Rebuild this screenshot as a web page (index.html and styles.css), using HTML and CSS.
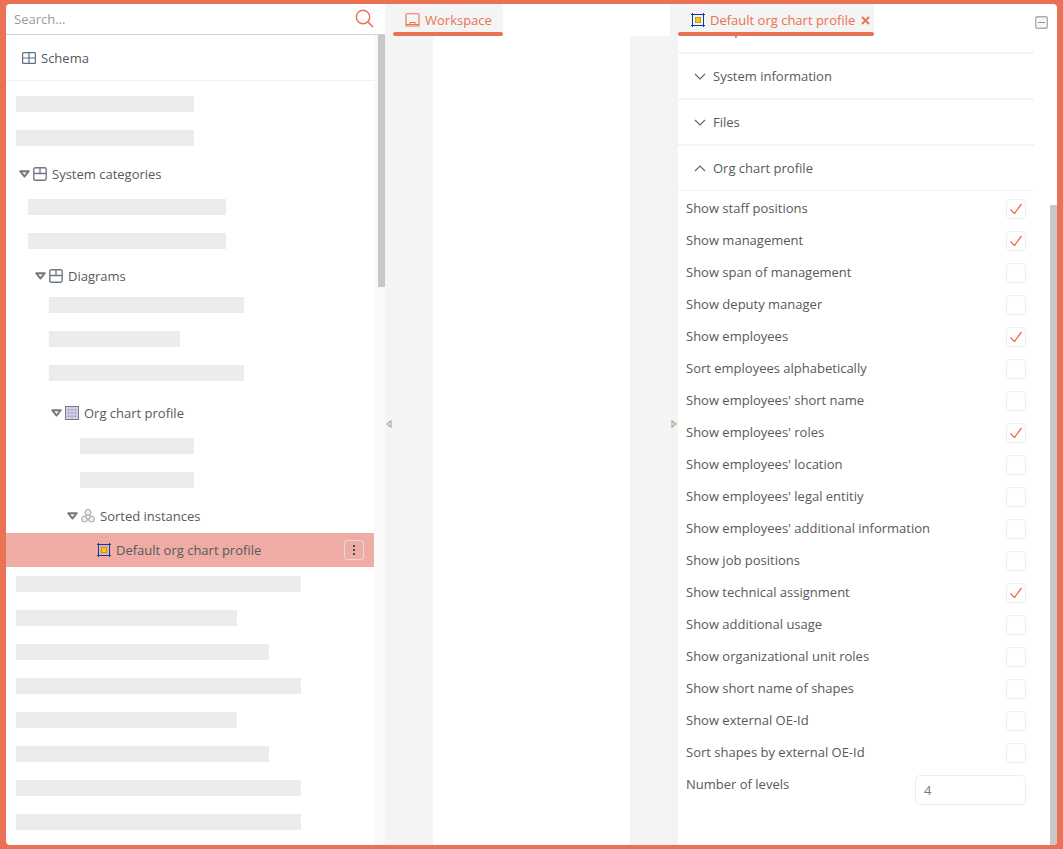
FILE: index.html
```html
<!DOCTYPE html>
<html lang="en">
<head>
<meta charset="utf-8">
<title>Default org chart profile</title>
<link rel="stylesheet" href="styles.css">
</head>
<body>
<svg class="defs" width="0" height="0" aria-hidden="true">
  <symbol id="tri" viewBox="0 0 11 8"><path d="M1.200 1.200H9.800L5.500 6.600Z" fill="#f4f4f4" stroke="#77787c" stroke-width="1.900" stroke-linejoin="round"/></symbol>
  <symbol id="box" viewBox="0 0 14 14"><path d="M2.500 .8H11.500Q13.200 .8 13.200 2.500V11.500Q13.200 13.200 11.500 13.200H2.500Q.8 13.200 .8 11.500V2.500Q.8 .8 2.500 .8ZM.8 6.500H13.200M7 .8V6.500" fill="none" stroke="#717884" stroke-width="1.400"/></symbol>
  <symbol id="prof" viewBox="0 0 14 14"><path d="M1.500 0V14M12.500 0V14M0 1.500H14M0 12.500H14" stroke="#1238a8" stroke-width="1" fill="none"/><rect x="4.400" y="4.400" width="5.200" height="5.200" fill="#f6c900" stroke="#b8901a" stroke-width=".8"/></symbol>
</svg>
<div class="app">
  <aside class="left">
    <div class="search">
      <span class="search-text">Search...</span>
      <svg class="search-icon" width="19" height="19" viewBox="0 0 19 19"><circle cx="8" cy="8" r="6.700" fill="none" stroke="#ea7153" stroke-width="1.400"/><path d="M12.800 12.800L18 18" stroke="#ea7153" stroke-width="1.600"/></svg>
    </div>
    <div class="left-body">
      <div class="tree-col">
        <div class="schema">
          <svg width="14" height="12" viewBox="0 0 14 12"><path d="M1.500 .6H12.500Q13.400 .6 13.400 1.500V10.500Q13.400 11.400 12.500 11.400H1.500Q.6 11.400 .6 10.500V1.500Q.6 .6 1.500 .6ZM.6 6H13.400M7 .6V11.400" fill="none" stroke="#5d6f82" stroke-width="1.200"/></svg>
          <span>Schema</span>
        </div>
        <div class="tree">
          <div class="skel l0 w178"></div>
          <div class="skel l0 w178"></div>
          <div class="node n-sys">
            <svg class="tri" width="11" height="8"><use href="#tri"/></svg>
            <svg class="ic" width="14" height="14"><use href="#box"/></svg>
            <span>System categories</span>
          </div>
          <div class="skel l1 w198"></div>
          <div class="skel l1 w198"></div>
          <div class="node n-dia">
            <svg class="tri" width="11" height="8"><use href="#tri"/></svg>
            <svg class="ic" width="14" height="14"><use href="#box"/></svg>
            <span>Diagrams</span>
          </div>
          <div class="skel l2 w195"></div>
          <div class="skel l2 w131"></div>
          <div class="skel l2 w195"></div>
          <div class="node n-org">
            <svg class="tri" width="11" height="8"><use href="#tri"/></svg>
            <svg class="ic" width="14" height="14" viewBox="0 0 14 14"><rect x=".5" y=".5" width="13" height="13" fill="#dcdcf4" stroke="#77787f"/><path d="M3.750 .5V13.500M7 .5V13.500M10.250 .5V13.500M.5 3.750H13.500M.5 7H13.500M.5 10.250H13.500" stroke="#a3a3bd" stroke-width=".8"/></svg>
            <span>Org chart profile</span>
          </div>
          <div class="skel l3 w114"></div>
          <div class="skel l3 w114"></div>
          <div class="node n-inst">
            <svg class="tri" width="11" height="8"><use href="#tri"/></svg>
            <svg class="ic" width="14" height="14" viewBox="0 0 14 14"><g fill="#f1f1f4" stroke="#94969d" stroke-width=".9"><circle cx="7" cy="3.500" r="3"/><circle cx="3.600" cy="10" r="3"/><circle cx="10.400" cy="10" r="3"/><circle cx="7" cy="8" r="2.200"/></g></svg>
            <span>Sorted instances</span>
          </div>
          <div class="selected">
            <svg class="ic" width="14" height="14"><use href="#prof"/></svg>
            <span>Default org chart profile</span>
            <span class="more"><i></i><i></i><i></i></span>
          </div>
          <div class="skel l0 w285"></div>
          <div class="skel l0 w221"></div>
          <div class="skel l0 w253"></div>
          <div class="skel l0 w285"></div>
          <div class="skel l0 w221"></div>
          <div class="skel l0 w253"></div>
          <div class="skel l0 w285"></div>
          <div class="skel l0 w285"></div>
        </div>
      </div>
      <div class="track"><div class="thumb thumb-left"></div></div>
    </div>
  </aside>
  <main class="main">
    <div class="topbar">
      <div class="tab tab-work">
        <div class="tab-label">
          <svg class="ws-icon" width="15" height="14" viewBox="0 0 15 14"><path d="M2 .7H13Q14 .7 14 1.700V11.500H1V1.700Q1 .7 2 .7ZM0 13H15M5 11.500V9.500H10V11.500" fill="none" stroke="#ea7153" stroke-width="1.100"/></svg>
          <span>Workspace</span>
        </div>
        <div class="underline"></div>
      </div>
      <div class="top-gap"></div>
      <div class="top-right">
        <div class="tab tab-prof">
          <div class="tab-label">
            <svg width="14" height="14"><use href="#prof"/></svg>
            <span class="tab-title">Default org chart profile</span>
            <svg class="close" width="9" height="9" viewBox="0 0 9 9"><path d="M1 1L8 8M8 1L1 8" stroke="#ea7153" stroke-width="1.800"/></svg>
          </div>
          <div class="underline"></div>
        </div>
        <svg class="collapse" width="13" height="13" viewBox="0 0 13 13"><rect x=".7" y=".7" width="11.600" height="11.600" rx="1.500" fill="#f8f8f8" stroke="#a9aeb6" stroke-width="1.400"/><path d="M3 6.500H10" stroke="#8f959e" stroke-width="1.200"/></svg>
      </div>
    </div>
    <div class="work">
      <div class="gutter gutter-l"><svg width="6" height="8" viewBox="0 0 6 8"><path d="M5 1V7L1 4Z" fill="#f4f4f4" stroke="#a8a8a8" stroke-width="1.200"/></svg></div>
      <div class="canvas"></div>
      <div class="gutter gutter-r"><svg width="6" height="8" viewBox="0 0 6 8"><path d="M1 1V7L5 4Z" fill="#f4f4f4" stroke="#b0a78f" stroke-width="1.200"/></svg></div>
      <section class="panel">
        <div class="panel-scroll">
          <div class="sec sec-first"><svg class="chev" width="12" height="7" viewBox="0 0 12 7"><path d="M1 1L6 6L11 1" fill="none" stroke="#5f6670" stroke-width="1.200"/></svg><span>Scope</span></div>
          <div class="sec"><svg class="chev" width="12" height="7" viewBox="0 0 12 7"><path d="M1 1L6 6L11 1" fill="none" stroke="#5f6670" stroke-width="1.200"/></svg><span>System information</span></div>
          <div class="sec"><svg class="chev" width="12" height="7" viewBox="0 0 12 7"><path d="M1 1L6 6L11 1" fill="none" stroke="#5f6670" stroke-width="1.200"/></svg><span>Files</span></div>
          <div class="sec sec-open"><svg class="chev" width="12" height="7" viewBox="0 0 12 7"><path d="M1 6L6 1L11 6" fill="none" stroke="#5f6670" stroke-width="1.200"/></svg><span>Org chart profile</span></div>
          <div class="rows">
            <label class="row"><span class="row-text">Show staff positions</span><span class="cb on"><svg width="14" height="12" viewBox="0 0 14 12"><path d="M1.500 6.500L5.500 10.500L12.500 1" fill="none" stroke="#ea7153" stroke-width="1.300"/></svg></span></label>
            <label class="row"><span class="row-text">Show management</span><span class="cb on"><svg width="14" height="12" viewBox="0 0 14 12"><path d="M1.500 6.500L5.500 10.500L12.500 1" fill="none" stroke="#ea7153" stroke-width="1.300"/></svg></span></label>
            <label class="row"><span class="row-text">Show span of management</span><span class="cb"></span></label>
            <label class="row"><span class="row-text">Show deputy manager</span><span class="cb"></span></label>
            <label class="row"><span class="row-text">Show employees</span><span class="cb on"><svg width="14" height="12" viewBox="0 0 14 12"><path d="M1.500 6.500L5.500 10.500L12.500 1" fill="none" stroke="#ea7153" stroke-width="1.300"/></svg></span></label>
            <label class="row"><span class="row-text">Sort employees alphabetically</span><span class="cb"></span></label>
            <label class="row"><span class="row-text">Show employees' short name</span><span class="cb"></span></label>
            <label class="row"><span class="row-text">Show employees' roles</span><span class="cb on"><svg width="14" height="12" viewBox="0 0 14 12"><path d="M1.500 6.500L5.500 10.500L12.500 1" fill="none" stroke="#ea7153" stroke-width="1.300"/></svg></span></label>
            <label class="row"><span class="row-text">Show employees' location</span><span class="cb"></span></label>
            <label class="row"><span class="row-text">Show employees' legal entitiy</span><span class="cb"></span></label>
            <label class="row"><span class="row-text">Show employees' additional information</span><span class="cb"></span></label>
            <label class="row"><span class="row-text">Show job positions</span><span class="cb"></span></label>
            <label class="row"><span class="row-text">Show technical assignment</span><span class="cb on"><svg width="14" height="12" viewBox="0 0 14 12"><path d="M1.500 6.500L5.500 10.500L12.500 1" fill="none" stroke="#ea7153" stroke-width="1.300"/></svg></span></label>
            <label class="row"><span class="row-text">Show additional usage</span><span class="cb"></span></label>
            <label class="row"><span class="row-text">Show organizational unit roles</span><span class="cb"></span></label>
            <label class="row"><span class="row-text">Show short name of shapes</span><span class="cb"></span></label>
            <label class="row"><span class="row-text">Show external OE-Id</span><span class="cb"></span></label>
            <label class="row"><span class="row-text">Sort shapes by external OE-Id</span><span class="cb"></span></label>
            <div class="levels"><span>Number of levels</span><span class="num">4</span></div>
          </div>
        </div>
        <div class="thumb-wrap"><div class="thumb thumb-right"></div></div>
      </section>
    </div>
  </main>
</div>
</body>
</html>
```
FILE: styles.css
```css
* { box-sizing: border-box; }
html, body { margin: 0; height: 100%; }
body {
  background: #ea7153;
  padding: 4px 6px;
  font-family: "Open Sans", "Liberation Sans", sans-serif;
  font-size: 13px;
  color: #555a60;
  overflow: hidden;
}
.defs { position: absolute; }
svg { display: block; flex: none; }
.app {
  display: flex;
  height: 841px;
  background: #fff;
  border-radius: 4px;
  overflow: hidden;
}
.left { width: 379px; display: flex; flex-direction: column; flex: none; }
.search {
  height: 31px;
  flex: none;
  display: flex;
  align-items: center;
  justify-content: space-between;
  padding: 0 11px 1px 8px;
  border-bottom: 1px solid #d2d2d2;
}
.search-text { color: #9a9a9a; }
.left-body { flex: 1; display: flex; min-height: 0; }
.tree-col { width: 368px; flex: none; display: flex; flex-direction: column; overflow: hidden; }
.schema {
  height: 46px;
  flex: none;
  display: flex;
  align-items: center;
  gap: 5px;
  padding: 0 0 0 16px;
  border-bottom: 1px solid #f1f1f1;
}
.tree { display: flex; flex-direction: column; padding-top: 6px; }
.skel { height: 16px; margin: 9px 0; background: #ececec; flex: none; }
.l0 { margin-left: 10px; }
.l1 { margin-left: 22px; }
.l2 { margin-left: 43px; }
.l3 { margin-left: 74px; }
.w114 { width: 114px; }
.w131 { width: 131px; }
.w178 { width: 178px; }
.w195 { width: 195px; }
.w198 { width: 198px; }
.w221 { width: 221px; }
.w253 { width: 253px; }
.w285 { width: 285px; }
.node { height: 24px; flex: none; display: flex; align-items: center; }
.node .tri { margin-right: 3px; }
.node .ic { margin-right: 5px; }
.n-sys { margin: 7px 0 4px; padding-left: 13px; }
.n-dia { margin: 6px 0 0; padding-left: 29px; }
.n-org { margin: 11px 0 4px; padding-left: 45px; }
.n-inst { margin: 7px 0 5px; padding-left: 61px; }
.selected {
  height: 34px;
  flex: none;
  display: flex;
  align-items: center;
  padding: 0 10px 0 91px;
  background: #eeaca4;
}
.selected .ic { margin-right: 5px; }
.more {
  margin-left: auto;
  width: 20px;
  height: 20px;
  border: 1px solid #dcdcdc;
  border-radius: 3px;
  display: flex;
  flex-direction: column;
  align-items: center;
  justify-content: center;
  gap: 2px;
}
.more i { width: 2px; height: 2px; background: #4a4a4a; display: block; }
.track { width: 11px; flex: none; background: #f9f9f9; display: flex; justify-content: flex-end; }
.thumb { background: #c8c8c8; width: 7px; }
.thumb-left { height: 252px; }
.main { flex: 1; display: flex; flex-direction: column; min-width: 0; }
.topbar { height: 32px; flex: none; display: flex; position: relative; z-index: 1; }
.tab { background: #f4f4f4; display: flex; flex-direction: column; height: 32px; flex: none; }
.tab-label { flex: 1; display: flex; align-items: center; gap: 5px; padding: 4px 0 0 21px; color: #ea7153; min-height: 0; }
.ws-icon { margin-left: -1px; }
.tab-title { white-space: nowrap; }
.underline { height: 4px; border-radius: 2px; background: #ea7153; margin-left: 8px; flex: none; }
.tab-work { width: 118px; }
.tab-prof { width: 204px; }
.tab-prof .close { margin-left: 1px; }
.top-gap { flex: 1; }
.top-right { width: 387px; flex: none; display: flex; justify-content: space-between; padding: 12px 10px 0 0; height: 32px; }
.top-right .tab { margin-top: -12px; }
.collapse { margin-right: -1px; }
.work { flex: 1; display: flex; min-height: 0; }
.gutter { width: 48px; flex: none; background: #f4f4f4; padding-top: 384px; }
.gutter-l { padding-left: 1px; }
.gutter-r { padding-left: 41px; }
.canvas { width: 197px; flex: none; }
.panel { flex: 1; display: flex; min-width: 0; }
.panel-scroll { width: 372px; flex: none; padding-right: 16px; overflow: hidden; }
.sec {
  height: 46px;
  display: flex;
  align-items: center;
  gap: 7px;
  padding-left: 16px;
  border-bottom: 2px solid #f4f4f4;
}
.sec-first { margin-top: -28px; }
.sec-open { border-bottom: 1px solid #f1f1f1; height: 45px; }
.rows { padding: 2px 8px 0; }
.row { height: 32px; display: flex; align-items: center; justify-content: space-between; }
.row-text { margin-bottom: 2px; }
.cb {
  width: 20px;
  height: 20px;
  border: 1px solid #eeeeee;
  border-radius: 4px;
  display: flex;
  align-items: center;
  justify-content: center;
}
.levels { display: flex; justify-content: space-between; align-items: flex-start; margin-top: 6px; }
.num {
  width: 111px;
  height: 30px;
  border: 1px solid #eeeeee;
  border-radius: 5px;
  padding-left: 8px;
  line-height: 28px;
  color: #777;
}
.thumb-wrap { flex: 1; display: flex; flex-direction: column; justify-content: flex-end; }
.thumb-right { height: 640px; }
```
